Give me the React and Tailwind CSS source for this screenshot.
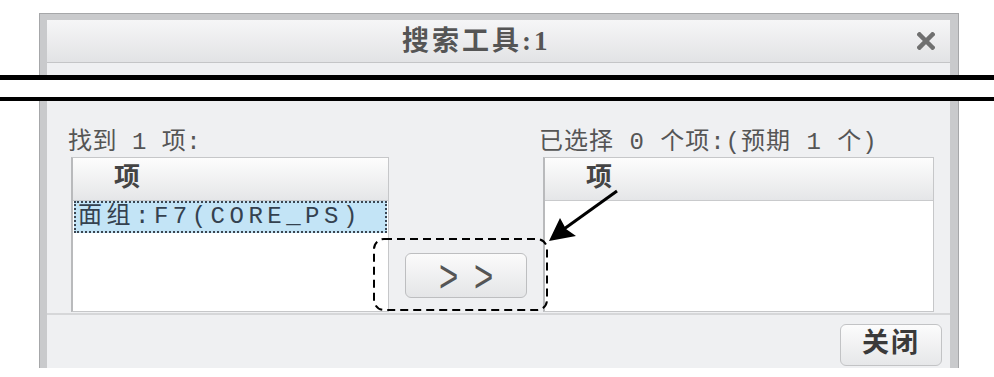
import React from 'react';

const cjk = { fontFamily: '"Liberation Mono", "Noto Sans CJK SC", monospace' };
const titleFont = { fontFamily: '"Liberation Serif", "Noto Sans CJK SC", serif' };

const ListBox = ({ width, children }) => (
    <div className={`${width} h-[155px] bg-white border border-[#c6c7c9] border-l-2 border-l-[#b9babc] flex flex-col`}>
        <div className="h-[43px] bg-gradient-to-b from-[#fdfdfd] to-[#e5e6e8] border-b border-[#c9cacc] pl-[41px] flex items-center">
            <span className="text-[26px] font-bold text-[#444] leading-none" style={cjk}>项</span>
        </div>
        {children}
    </div>
);

const App = () => {
    return (
        <div className="relative w-[994px] h-[377px] bg-white overflow-hidden">
            <div className="pt-[13px] pl-[39px]">
                {/* dialog frame */}
                <div className="w-[920px] h-[355px] bg-[#c9cacc] border-t border-l border-r border-[#a6a7a9] pt-[6px] pl-[7px] pr-[8px] flex flex-col">
                    {/* title bar */}
                    <div className="h-[43px] bg-gradient-to-b from-[#f6f6f7] to-[#e2e3e5] border-b border-[#c4c5c7] flex items-center">
                        <span className="ml-[355px] text-[27px] font-bold text-[#555] tracking-[3px] leading-none" style={titleFont}>
                            搜索工具:1
                        </span>
                        <svg className="ml-auto mr-[15px]" width="18" height="18" viewBox="0 0 18 18">
                            <path d="M2.5 2.5 L15.5 15.5 M15.5 2.5 L2.5 15.5" stroke="#707070" strokeWidth="4.5" strokeLinecap="square" />
                        </svg>
                    </div>

                    {/* content */}
                    <div className="flex-1 bg-[#eff0f2] pt-[65px] flex">
                        <div className="ml-[24px] w-[318px] flex flex-col">
                            <div className="-ml-[3px] h-[29px] text-[24px] text-[#555] leading-[29px] tracking-[0.5px]" style={cjk}>
                                找到 1 项:
                            </div>
                            <ListBox width="w-[318px]">
                                <div className="mx-[1px] h-[32px] bg-[#c3e4f6] border-2 border-dotted border-[#3b4652] flex items-center pl-[2px]">
                                    <span className="text-[24px] text-[#34414f] leading-none tracking-[4.5px] whitespace-nowrap" style={cjk}>
                                        面组:F7(CORE_PS)
                                    </span>
                                </div>
                            </ListBox>
                        </div>

                        <div className="w-[154px] pt-[125px] pl-[16px]">
                            <button className="w-[122px] h-[45px] rounded-[6px] border border-[#bdbec0] bg-gradient-to-b from-[#fbfbfb] to-[#e4e5e7] flex items-center justify-center gap-[17px] text-[30px] text-[#555] leading-none" style={{ fontFamily: '"Liberation Sans", sans-serif' }}>
                                <span className="inline-block scale-x-[1.1] scale-y-[1.55]">&gt;</span>
                                <span className="inline-block scale-x-[1.1] scale-y-[1.55]">&gt;</span>
                            </button>
                        </div>

                        <div className="w-[391px] flex flex-col">
                            <div className="-ml-[4px] h-[29px] text-[24px] text-[#555] leading-[29px] tracking-[1px] whitespace-nowrap" style={cjk}>
                                已选择 0 个项:(预期 1 个)
                            </div>
                            <ListBox width="w-[391px]" />
                        </div>
                    </div>

                    {/* footer */}
                    <div className="h-[55px] bg-[#eff0f2] border-t-2 border-[#d6d7d9] flex justify-end pt-[9px] pr-[8px]">
                        <button className="w-[102px] h-[42px] rounded-[6px] border border-[#c2c3c5] bg-gradient-to-b from-[#fcfcfc] to-[#e6e7e9] text-[27px] font-bold text-[#3a3a3a] tracking-[2px] leading-none" style={cjk}>
                            关闭
                        </button>
                    </div>
                </div>
            </div>

            {/* break lines across the dialog */}
            <div className="absolute left-0 top-[75px] w-full h-[26px] bg-white border-t-[5px] border-b-[4px] border-black" />

            {/* annotations */}
            <svg className="absolute left-0 top-0 pointer-events-none" width="994" height="377">
                <rect x="374" y="239" width="173" height="71" rx="10" fill="none" stroke="#000" strokeWidth="2" strokeDasharray="8 5" />
                <line x1="617" y1="191" x2="564" y2="229" stroke="#000" strokeWidth="3" />
                <polygon points="549,241 576,236 566,229 560,218" fill="#000" />
            </svg>
        </div>
    );
};

export default App;
